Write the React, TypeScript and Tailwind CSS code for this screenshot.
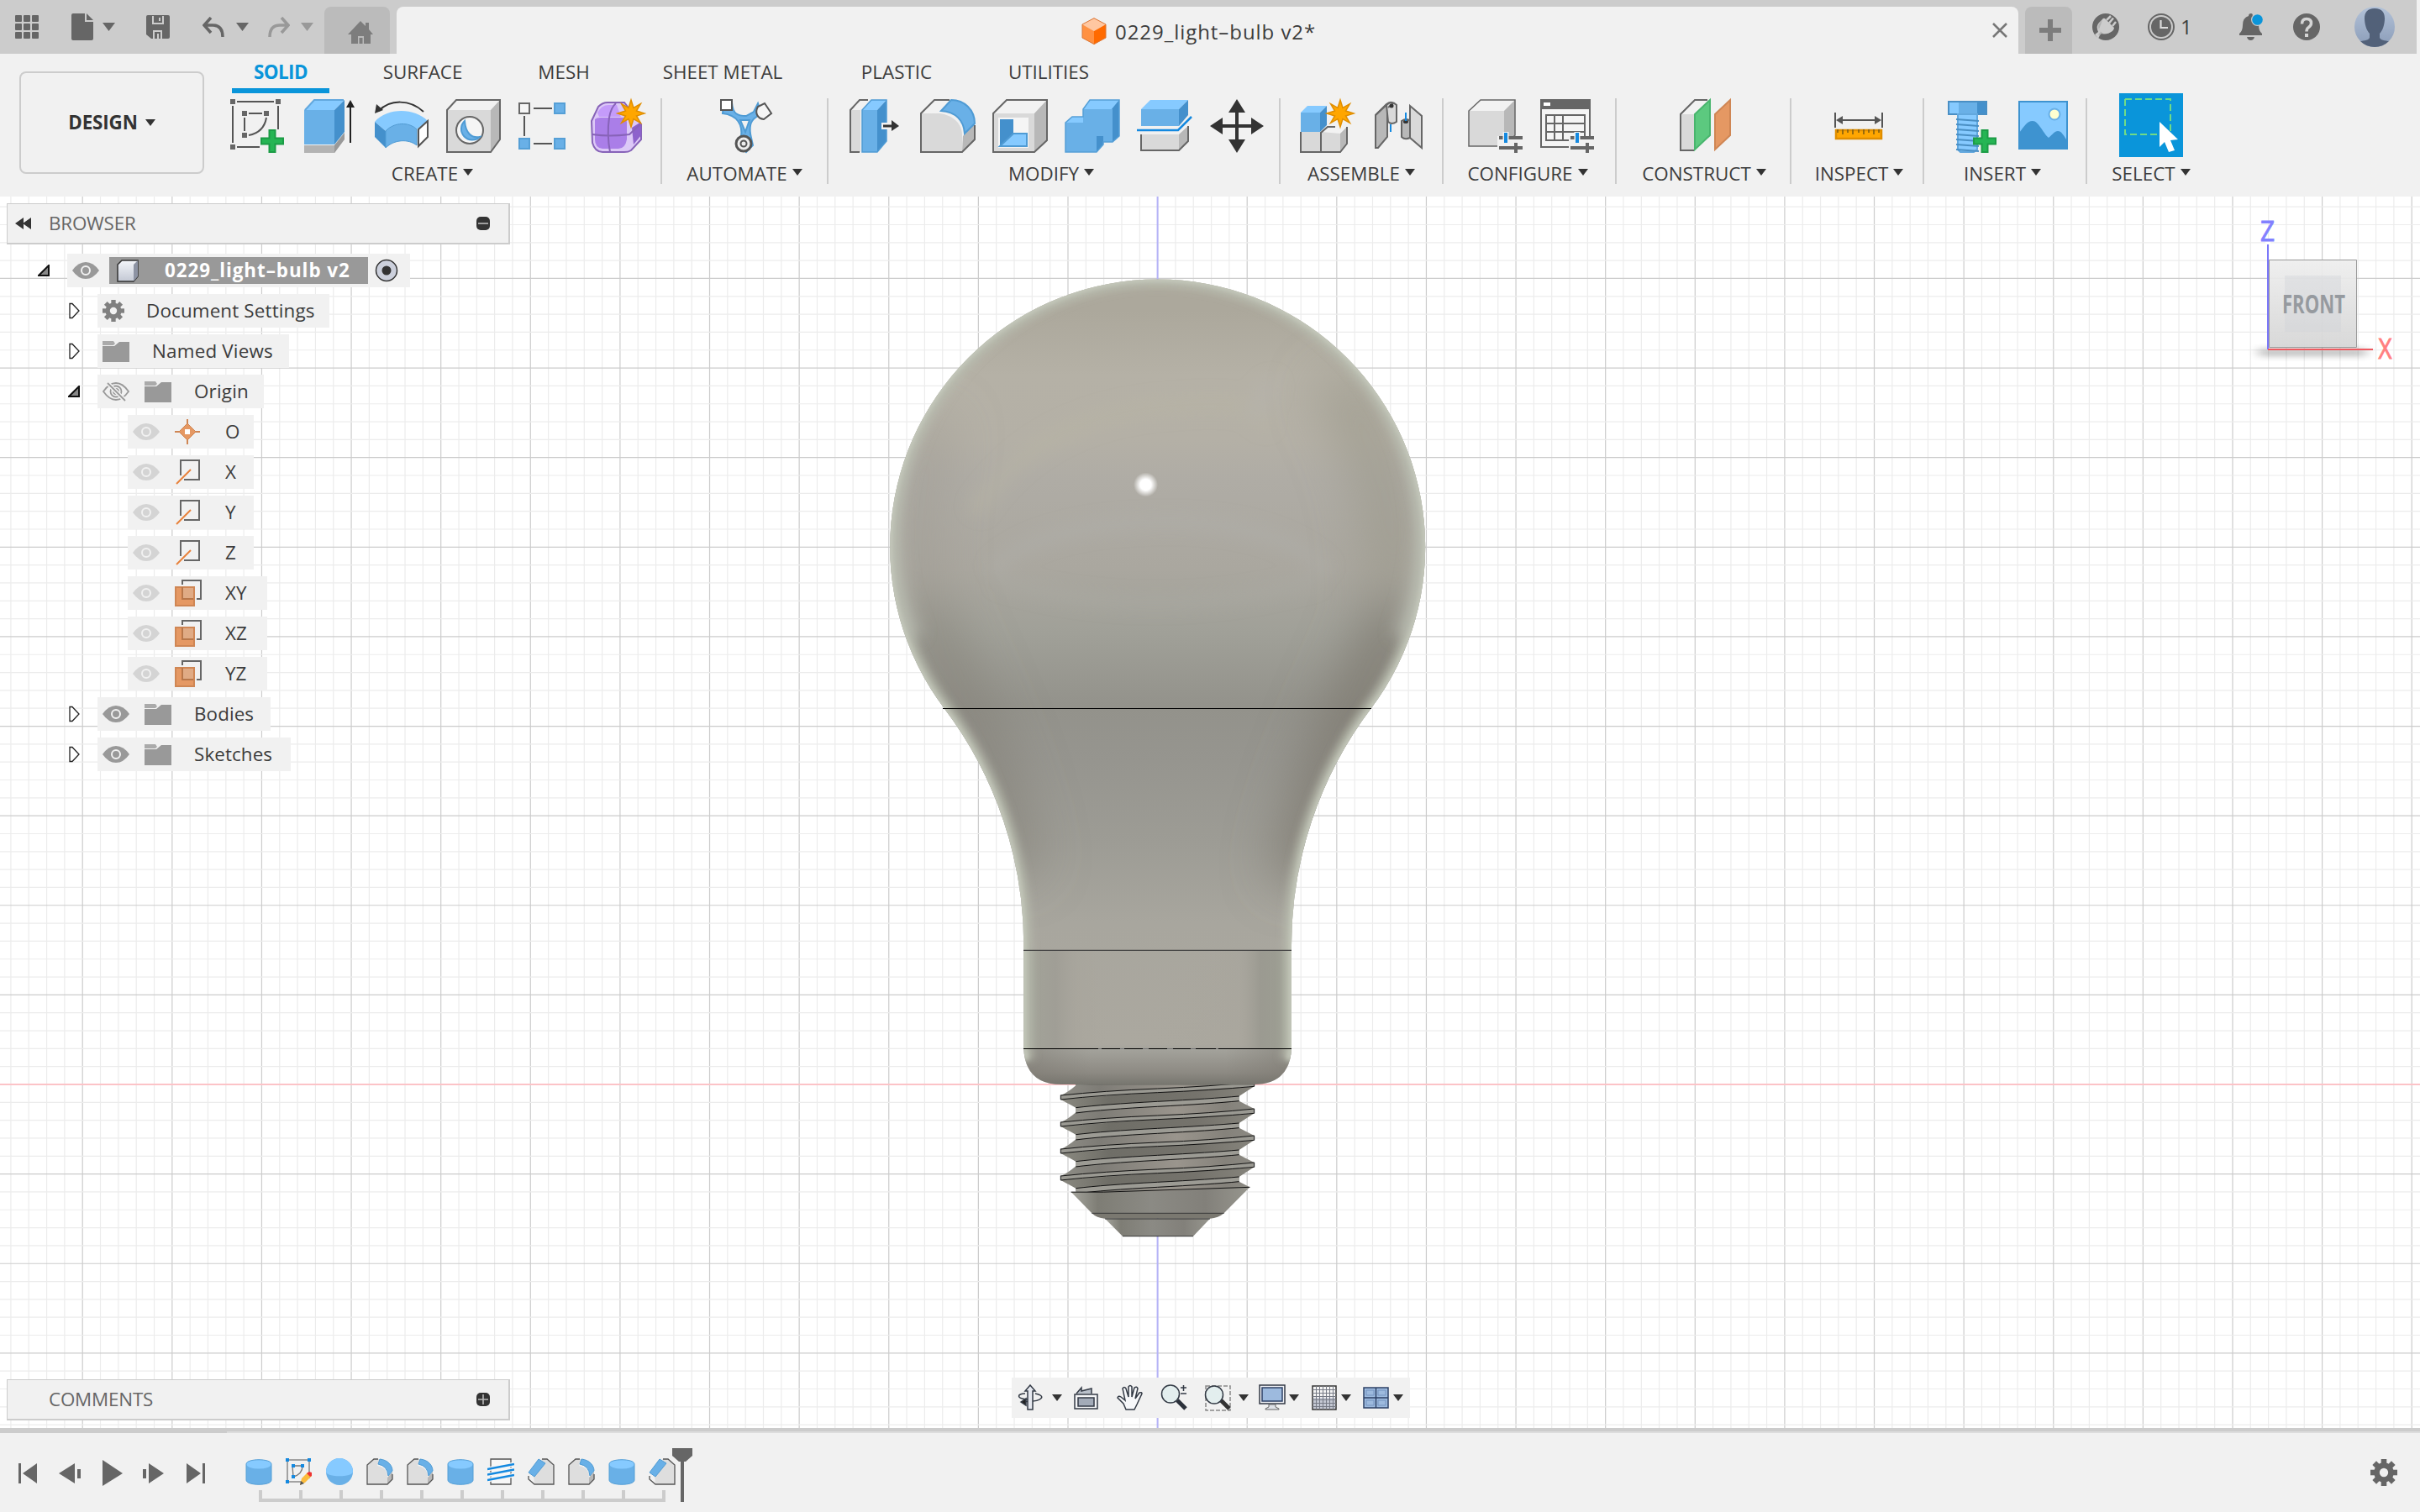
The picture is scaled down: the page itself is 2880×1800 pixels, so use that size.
import React from "react";

type Kids = { children?: React.ReactNode };

const Icon = ({ children }: Kids) => (
  <svg className="h-[66px] w-[66px] shrink-0 overflow-visible" viewBox="0 0 66 66" fill="none" strokeWidth="2">
    {children}
  </svg>
);

const Caret = ({ className = "" }: { className?: string }) => (
  <svg className={`h-[8px] w-[12px] shrink-0 fill-[#333] ${className}`} viewBox="0 0 12 8">
    <path d="M0 0h12L6 8z" />
  </svg>
);

const BarCaret = ({ className }: { className: string }) => (
  <svg className={`h-[10px] w-[15px] shrink-0 ${className}`} viewBox="0 0 15 10">
    <path d="M0 0h15L7.500 10z" />
  </svg>
);

const Plus = ({ x, y }: { x: number; y: number }) => (
  <path
    transform={`translate(${x} ${y})`}
    d="M9.500 1h7v9.500H26v7h-9.500V27h-7v-9.500H0v-7h9.500z"
    fill="#26b554"
    stroke="#1c9c46"
    strokeWidth="2"
  />
);

const Star = ({ x, y }: { x: number; y: number }) => (
  <path
    transform={`translate(${x} ${y})`}
    d="M0-16l3 9.500 8.300-4.800L6.500-3 16 0 6.500 3l4.800 8.300L3 6.500 0 16l-3-9.500-8.300 4.800L-6.500 3-16 0l9.500-3-4.800-8.300L-3-6.500z"
    fill="#ffa600"
    stroke="#e08e00"
    strokeWidth="1.500"
  />
);

const Tweaks = ({ x, y }: { x: number; y: number }) => (
  <g transform={`translate(${x} ${y})`}>
    <path d="M-2 4h31v4H-2zM-2 8h31v15H-2z" fill="#f1f1f1" stroke="none" />
    <path d="M0 6h28M0 18h28M20 12v12" stroke="#666" strokeWidth="4" />
    <path d="M8-1v14" stroke="#f1f1f1" strokeWidth="7" />
    <path d="M8 0v12" stroke="#1489e0" strokeWidth="4" />
  </g>
);

/* ---------- ribbon icons ---------- */

const SketchIcon = () => (
  <Icon>
    <path d="M9 5h44M4 10v44M58 10v28M9 59h27M18 24v16M23 19h16M44 24C42 36 34 43 23 45" stroke="#555" />
    <path d="M1 2h6v6H1zM55 2h6v6h-6zM1 56h6v6H1zM15 16h6v6h-6zM41 16h6v6h-6zM15 42h6v6h-6z" fill="#666" />
    <Plus x={38} y={38} />
  </Icon>
);

const ExtrudeIcon = () => (
  <Icon>
    <path d="M3 57h36l12-15v7L39 66H3z" fill="#b3b3b3" />
    <path d="M39 57l12-15v8L39 66z" fill="#999" />
    <path d="M3 15L15 3h36L39 15z" fill="#86caff" />
    <path d="M3 15h36v41H3z" fill="#69b0e7" />
    <path d="M39 15L51 3v38L39 56z" fill="#4490cc" />
    <path d="M4 15L15 3h35" stroke="#62a8de" />
    <path d="M58 54V10" stroke="#222" />
    <path d="M58 3l5 9H53z" fill="#222" />
  </Icon>
);

const RevolveIcon = () => (
  <Icon>
    <path d="M6 16C19 2 43 2 59 17" stroke="#333" />
    <path d="M1 19L3 8l8 7z" fill="#333" />
    <path d="M1 29C16 12 48 12 64 28L51 38C42 29 24 29 14 40z" fill="#86caff" />
    <path d="M1 29l13 11v20L1 47z" fill="#4490cc" />
    <path d="M14 40C24 29 42 29 51 38v19C41 49 24 50 14 60z" fill="#69b0e7" stroke="#4f9bd4" strokeWidth="1" />
    <path d="M64 28L53 38v20l11-11z" fill="#fff" stroke="#555" />
  </Icon>
);

const HoleIcon = () => (
  <Icon>
    <path d="M1 15L12 3h52L53 15z" fill="#f2f2f2" />
    <path d="M1 15h52v50H1z" fill="#d9d9d9" />
    <path d="M53 15L64 3v47L53 65z" fill="#b8b8b8" />
    <path d="M1 15L12 3h52v47L53 65H1z" stroke="#666" />
    <circle cx="28" cy="39" r="16" fill="#f5f5f5" stroke="#666" />
    <path d="M22 28C23 42 30 49 40 47A13 13 0 1 1 22 28z" fill="#69b0e7" stroke="#4f9bd4" />
  </Icon>
);

const PatternIcon = () => (
  <Icon>
    <path d="M18 13h22M7 22v24M18 55h22" stroke="#555" />
    <path d="M1 7h12v12H1z" fill="#f5f5f5" stroke="#666" />
    <path d="M43 7h12v12H43zM1 49h12v12H1zM43 49h12v12H43z" fill="#69b0e7" stroke="#559fd6" />
  </Icon>
);

const FormIcon = () => (
  <Icon>
    <path d="M1 28L9 11Q14 6 20 6h20l20 26v18L48 63q-3 2-8 2H14Q5 65 2 54z" fill="#dcc8f7" stroke="#8763b8" />
    <path d="M8 18q5-9 13-9h10l5 14H10z" fill="#c49bfa" />
    <path d="M5 26Q7 24 12 24h26q5 0 5 6v20q-2 11-10 11H14Q5 60 5 50z" fill="#aa7ee8" />
    <path d="M49 36l11-7v16l-9 11z" fill="#8d62cc" />
    <path d="M22 24q-3 20 1 41M2 44q20 3 44 0l13-12M22 24q2-12 8-17" stroke="#8763b8" />
    <Star x={48} y={19} />
  </Icon>
);

const AutomateIcon = () => (
  <Icon>
    <path d="M18 6c1 14 7 16 17 16l9-5 5-10 4 12-7 5c-6 4-8 12-5 24l2 9-8 8-8-8 2-10c2-14-4-26-22-28l1-12z" fill="#69b0e7" stroke="#4f9bd4" />
    <path d="M28 27h11l-5 14z" fill="#f1f1f1" stroke="#4f9bd4" />
    <path d="M5 3h13v12H5z" fill="#fff" stroke="#555" />
    <path d="M57 7l8 12-9 7c-8-1-11-8-7-15z" fill="#f5f5f5" stroke="#555" />
    <circle cx="32" cy="55" r="9" fill="#eee" stroke="#555" strokeWidth="3" />
    <circle cx="32" cy="55" r="3.500" stroke="#555" />
  </Icon>
);

const PressPullIcon = () => (
  <Icon>
    <path d="M3 15L14 3h12L15 15v50H3z" fill="#f2f2f2" />
    <path d="M3 15h12v50H3z" fill="#d9d9d9" />
    <path d="M24 3H14L3 15v50h11" stroke="#666" />
    <path d="M17 15L28 3h18L35 15z" fill="#86caff" />
    <path d="M17 15h18v50H17z" fill="#69b0e7" />
    <path d="M35 15L46 3v49L35 65z" fill="#4490cc" />
    <path d="M17 65V15L28 3h18v49L35 65z" stroke="#4f9bd4" strokeWidth="1.500" />
    <path d="M41 31h11v-5l10 8-10 8v-5H41z" fill="#f1f1f1" stroke="#f1f1f1" strokeWidth="2" />
    <path d="M42 34h12" stroke="#333" strokeWidth="3" />
    <path d="M52 27l9 7-9 6z" fill="#333" />
  </Icon>
);

const FilletIcon = () => (
  <Icon>
    <path d="M1 19L17 3h18L25 18z" fill="#f2f2f2" />
    <path d="M1 19h22c16 2 27 12 27 26v20H1z" fill="#d9d9d9" />
    <path d="M51 46l14-15v20L50 65z" fill="#b8b8b8" />
    <path d="M35 3H17L1 19v46h49l15-15V33" stroke="#666" />
    <path d="M37 3c16 0 28 12 28 28L53 43C52 27 42 17 25 16z" fill="#69b0e7" stroke="#4f9bd4" />
  </Icon>
);

const ShellIcon = () => (
  <Icon>
    <path d="M1 19L17 3h48L50 19z" fill="#f2f2f2" />
    <path d="M1 19h49v46H1z" fill="#d9d9d9" />
    <path d="M50 19L65 3v48L50 65z" fill="#b8b8b8" />
    <path d="M1 19L17 3h48v48L50 65H1z" stroke="#666" />
    <path d="M7 24h36v36H7z" fill="#f5f5f5" />
    <path d="M9 26h16v17L9 58z" fill="#4490cc" />
    <path d="M9 58l16-15h16v15z" fill="#86caff" stroke="#4f9bd4" />
  </Icon>
);

const CombineIcon = () => (
  <Icon>
    <path d="M1 30l8-7h13v-9l8-11h35v43l-8 7H46v3l-8 9H1z" fill="#69b0e7" />
    <path d="M1 30l8-7h13v7zM22 14l8-11h35l-9 11z" fill="#86caff" />
    <path d="M56 14l9-11v43l-8 7V14zM38 46h8v10l-8 9z" fill="#4490cc" />
    <path d="M1 30l8-7h13v-9l8-11h35v43l-8 7H46v3l-8 9H1z" stroke="#559fd6" strokeWidth="1.500" />
  </Icon>
);

const SplitIcon = () => (
  <Icon>
    <path d="M5 14L16 3h45L50 14z" fill="#86caff" />
    <path d="M5 14h45v20H5z" fill="#69b0e7" />
    <path d="M50 14L61 3v18L50 34z" fill="#4490cc" />
    <path d="M5 44h45v19H5z" fill="#d9d9d9" />
    <path d="M50 44l11-10v18L50 63z" fill="#b8b8b8" />
    <path d="M5 44v19h45l11-11V34" stroke="#666" />
    <path d="M0 39h49l16-16" stroke="#1489e0" strokeWidth="2.500" />
  </Icon>
);

const MoveIcon = () => (
  <Icon>
    <path d="M33 12v44M11 34h44" stroke="#333" strokeWidth="4" />
    <path d="M33 2l10 16H23zM33 66l10-16H23zM1 34l15-10v20zM65 34L50 24v20z" fill="#333" />
  </Icon>
);

const ComponentIcon = () => (
  <Icon>
    <path d="M2 41h24v24H2z" fill="#d9d9d9" />
    <path d="M26 41h23v24H26z" fill="#d9d9d9" />
    <path d="M26 41l9-6h22l-8 8z" fill="#f2f2f2" />
    <path d="M49 43l8-8v20l-8 10z" fill="#b8b8b8" />
    <path d="M2 41v24h47l8-10V35M26 65V42l8-7h9" stroke="#666" />
    <path d="M2 18l8-8h23l-8 8z" fill="#86caff" />
    <path d="M2 18h23v23H2z" fill="#69b0e7" />
    <path d="M25 18l8-8v23l-8 8z" fill="#4490cc" />
    <Star x={49} y={19} />
  </Icon>
);

const JointIcon = () => (
  <Icon>
    <g transform="translate(2 0)">
      <path d="M3 21L17 8v39L6 60H3z" fill="#b8b8b8" stroke="#666" />
      <path d="M16 9q6-6 12 0v20q-6 4-10 0z" fill="#d9d9d9" stroke="#666" />
      <path d="M3 21L16 8q5-4 8-1l-6 5" stroke="#666" />
      <circle cx="22" cy="10" r="2.500" fill="#333" />
      <path d="M21 32v9" stroke="#1489e0" />
      <path d="M44 10l14 12v38l-14-12z" fill="#d9d9d9" stroke="#666" />
      <path d="M34 28q6-4 10 0v20q-6 3-10-1z" fill="#b8b8b8" stroke="#666" />
      <ellipse cx="39" cy="29" rx="3" ry="2" fill="#333" />
      <path d="M39 18v10" stroke="#1489e0" />
    </g>
  </Icon>
);

const ConfigureIcon = () => (
  <Icon>
    <path d="M1 16L15 3h41L43 16z" fill="#f2f2f2" />
    <path d="M1 16h42v42H1z" fill="#d9d9d9" />
    <path d="M43 16L56 3v42L43 58z" fill="#b8b8b8" />
    <path d="M1 16L15 3h41v42L43 58H1z" stroke="#666" strokeWidth="1.500" />
    <Tweaks x={37} y={42} />
  </Icon>
);

const ConfigTableIcon = () => (
  <Icon>
    <path d="M1 3h58v56H1z" fill="#f5f5f5" stroke="#666" />
    <path d="M0 2h60v12H0z" fill="#666" />
    <path d="M4 6h8v4H4z" fill="#fff" />
    <path d="M7 21h46v30H7zM7 31h46M7 41h46M17 21v30M27 21v30" stroke="#666" />
    <Tweaks x={36} y={42} />
  </Icon>
);

const PlaneIcon = () => (
  <Icon>
    <path d="M4 20L21 3h16L21 20z" fill="#f2f2f2" />
    <path d="M4 20h16v43H4z" fill="#d9d9d9" />
    <path d="M36 3H21L4 20v43h16" stroke="#666" />
    <path d="M21 20L39 3v42L21 62z" fill="#5cc97f" stroke="#48b56d" />
    <path d="M45 20L63 3v42L45 62z" fill="#e59863" stroke="#cf8654" />
  </Icon>
);

const MeasureIcon = () => (
  <Icon>
    <path d="M5 18v18M61 18v18M10 27h46" stroke="#555" />
    <path d="M6 27l8-5v10zM60 27l-8-5v10z" fill="#555" />
    <path d="M6 39h54v10H6z" fill="#ffa600" stroke="#e08e00" strokeWidth="2.500" />
    <path d="M8 38v4M14 38v6M20 38v4M26 38v6M33 38v4M39 38v6M45 38v4M51 38v6M57 38v4" stroke="#7a5a10" strokeWidth="1.500" />
  </Icon>
);

const BoltIcon = () => (
  <Icon>
    <path d="M6 5h45v15H6z" fill="#69b0e7" stroke="#4a8fc4" />
    <path d="M7 6h11v13H7z" fill="#86caff" />
    <path d="M40 6h10v13H40z" fill="#4490cc" />
    <path d="M17 20h23v42l-4 3H20l-3-3z" fill="#86caff" stroke="#62a8de" />
    {[26, 32, 38, 44, 50, 56, 62].map((y) => (
      <path key={y} d={`M15 ${y}l27 2`} stroke="#4a8fc4" />
    ))}
    <Plus x={36} y={38} />
  </Icon>
);

const ImageIcon = () => (
  <Icon>
    <path d="M4 5h57v56H4z" fill="#86caff" stroke="#3e93d0" />
    <path d="M4 42c5-6 9-14 16-14s12 14 19 20c5-4 7-8 11-8s7 5 10 10v10H4z" fill="#3e93d0" />
    <circle cx="46" cy="20" r="6.500" fill="#feffd0" stroke="#69b0e7" strokeWidth="2" />
  </Icon>
);

const SelectIcon = () => (
  <svg className="-my-[5px] h-[76px] w-[76px] bg-[#0a95da]" viewBox="0 0 76 76" fill="none">
    <path d="M7 7h54v41H50M7 7v42h38" stroke="#70db86" strokeWidth="2" strokeDasharray="8 4" />
    <path d="M48 34l22 21-9 1 5 12-7 2-5-12-6 6z" fill="#fff" />
  </svg>
);

const groups: { label: string; width: string; icons: React.FC[]; row?: string; text?: string }[] = [
  { label: "CREATE", width: "w-[545px]", icons: [SketchIcon, ExtrudeIcon, RevolveIcon, HoleIcon, PatternIcon, FormIcon], row: "pl-3" },
  { label: "AUTOMATE", width: "w-[198px]", icons: [AutomateIcon] },
  { label: "MODIFY", width: "w-[538px]", icons: [PressPullIcon, FilletIcon, ShellIcon, CombineIcon, SplitIcon, MoveIcon], row: "pl-[6px]", text: "pr-[6px]" },
  { label: "ASSEMBLE", width: "w-[194px]", icons: [ComponentIcon, JointIcon], row: "pl-1" },
  { label: "CONFIGURE", width: "w-[206px]", icons: [ConfigureIcon, ConfigTableIcon], row: "pl-[6px]", text: "pr-1" },
  { label: "CONSTRUCT", width: "w-[208px]", icons: [PlaneIcon], row: "pl-[3px]", text: "pl-[2px]" },
  { label: "INSPECT", width: "w-[158px]", icons: [MeasureIcon], row: "pl-1", text: "pl-[5px]" },
  { label: "INSERT", width: "w-[194px]", icons: [BoltIcon, ImageIcon], row: "pl-[6px]", text: "pr-[6px]" },
  { label: "SELECT", width: "w-[150px]", icons: [SelectIcon], row: "pl-[2px]", text: "pl-[2px]" },
];

const tabs = [
  { label: "SOLID", cls: "w-[116px] font-bold text-[#0a95da] tracking-[-0.6px]" },
  { label: "SURFACE", cls: "ml-[53px] w-[116px]" },
  { label: "MESH", cls: "ml-[52px] w-[116px]" },
  { label: "SHEET METAL", cls: "ml-[44px] w-[174px]" },
  { label: "PLASTIC", cls: "ml-[62px] w-[116px]" },
  { label: "UTILITIES", cls: "ml-[65px] w-[116px]" },
];

/* ---------- title bar ---------- */

const TitleBar = () => (
  <header className="mr-1 flex h-16 items-end bg-[#cccccc]">
    <div className="flex h-16 w-[386px] items-center pl-[18px]">
      <svg className="h-7 w-7 fill-[#666]" viewBox="0 0 28 28">
        {[0, 10, 20].map((y) => [0, 10, 20].map((x) => <rect key={`${x}-${y}`} x={x} y={y} width="8" height="8" rx="1" />))}
      </svg>
      <svg className="ml-[39px] h-8 w-[26px] fill-[#666]" viewBox="0 0 26 32">
        <path d="M2 0h14v10h10v20q0 2-2 2H2q-2 0-2-2V2q0-2 2-2zM18 0l8 8h-8z" />
      </svg>
      <BarCaret className="ml-[11px] fill-[#666]" />
      <svg className="ml-[37px] h-7 w-7" viewBox="0 0 28 28">
        <path d="M2 0h24q2 0 2 2v24q0 2-2 2H6l-6-5V2q0-2 2-2z" fill="#666" />
        <path d="M8 1v9h12V1M9 28v-9h9v9" fill="none" stroke="#ccc" strokeWidth="2" />
        <path d="M15 3h2v4h-2zM13 22h2v6h-2z" fill="#ccc" />
      </svg>
      <svg className="ml-[39px] h-6 w-[26px]" viewBox="0 0 26 24" fill="none" stroke="#666" strokeWidth="3.500">
        <path d="M10 1L2 10l8 9M3 10h9q12 0 12 14" />
      </svg>
      <BarCaret className="ml-[14px] fill-[#666]" />
      <svg className="ml-[23px] h-6 w-[26px]" viewBox="0 0 26 24" fill="none" stroke="#999" strokeWidth="3.500">
        <path d="M16 1l8 9-8 9M23 10h-9Q2 10 2 24" />
      </svg>
      <BarCaret className="ml-[13px] fill-[#999]" />
    </div>
    <div className="flex h-14 w-[78px] items-center justify-center rounded-t-lg bg-[#bbbbbb] pl-[7px] pt-[6px]">
      <svg className="h-[28px] w-[30px]" viewBox="0 0 30 28">
        <path d="M15 0l6 6V2h4v8l5 6h-3v11H19v-9h-7v9H4V16H0z" fill="#7d7d7d" />
        <path d="M13.500 20h4v7h-4z" fill="#7d7d7d" />
      </svg>
    </div>
    <div className="ml-2 flex h-14 w-[1930px] items-center rounded-t-lg bg-[#f1f1f1]">
      <svg className="ml-[815px] mt-[2px] h-8 w-[30px]" viewBox="0 0 30 32">
        <path d="M15 0l14 8-14 8L1 8z" fill="#ffc7a1" />
        <path d="M1 8l14 8v16L1 24z" fill="#ff9142" />
        <path d="M29 8l-14 8v16l14-8z" fill="#ff6a00" />
        <path d="M15 .7L29 8v16l-14 7.500L1 24V8z" fill="none" stroke="#d9783a" strokeWidth="1" />
      </svg>
      <span className="ml-[10px] mt-1 text-[24px] tracking-[0.95px] text-[#3c3c3c]">0229_light–bulb v2*</span>
      <svg className="ml-auto mr-[13px] h-[18px] w-[18px]" viewBox="0 0 18 18" stroke="#777" strokeWidth="2.500">
        <path d="M1 1l16 16M17 1L1 17" />
      </svg>
    </div>
    <div className="ml-2 flex h-14 w-14 items-center justify-center rounded-t-lg bg-[#bbbbbb] pl-[3px]">
      <svg className="h-[26px] w-[26px]" viewBox="0 0 26 26" stroke="#7d7d7d" strokeWidth="6">
        <path d="M13 0v26M0 13h26" />
      </svg>
    </div>
    <div className="flex h-16 flex-1 items-center pl-6">
      <svg className="h-8 w-8" viewBox="0 0 32 32">
        <circle cx="16" cy="16" r="16" fill="#666" />
        <path d="M3 25L7 22Q4 15 8 11L12 7q1-2 3-1l11 11q0 2-2 4-7 5-13 3l-2 2-2 4z" fill="#ccc" />
        <path d="M17 8l5-5M24 15l4-5M20 11.500l5-6" fill="none" stroke="#ccc" strokeWidth="2.500" />
        <path d="M12 8q-5 4-5 8 0 3 3 6l-3 3q8 7 16 4 5-2 8-8l-5-2q-4 6-10 6-6-2-8-6z" fill="#666" fillOpacity="0.250" />
      </svg>
      <svg className="ml-[34px] h-8 w-8" viewBox="0 0 32 32" fill="none">
        <circle cx="16" cy="16" r="15" stroke="#666" strokeWidth="2" />
        <circle cx="16" cy="16" r="12" fill="#666" />
        <path d="M15.500 8v9H24" stroke="#ddd" strokeWidth="2.200" />
      </svg>
      <span className="ml-[7px] text-[24px] text-[#3c3c3c]">1</span>
      <svg className="ml-[56px] h-8 w-[30px]" viewBox="0 0 30 32">
        <path d="M14 0q2 0 2 3 7 2 7 11 0 7 4 10v2H0v-2q4-3 4-10 0-9 7-11 0-3 3-3zM9 28h9q-1 4-4.500 4T9 28z" fill="#666" />
        <circle cx="21.500" cy="7.500" r="7.500" fill="#ccc" />
        <circle cx="21.500" cy="7.500" r="6.300" fill="#0a95da" />
      </svg>
      <svg className="ml-[34px] h-8 w-8" viewBox="0 0 32 32" fill="none">
        <circle cx="16" cy="16" r="16" fill="#666" />
        <path d="M10.500 12.500q0-6 5.500-6t5.500 5q0 3-3 5-2.500 1.500-2.500 5" stroke="#d5d5d5" strokeWidth="3.500" />
        <path d="M14 24h4v4h-4z" fill="#d5d5d5" />
      </svg>
      <svg className="ml-[41px] h-12 w-12" viewBox="0 0 48 48">
        <defs>
          <linearGradient id="avatar" x1="0" y1="0" x2="0" y2="1">
            <stop offset="0" stopColor="#b3c2d8" />
            <stop offset="1" stopColor="#8a9cb8" />
          </linearGradient>
          <clipPath id="avatarClip">
            <circle cx="24" cy="24" r="24" />
          </clipPath>
        </defs>
        <g clipPath="url(#avatarClip)">
          <path d="M0 0h48v48H0z" fill="url(#avatar)" />
          <path d="M24 2c9 0 12 5 12 12 0 6-2 14-6 18v5c2 4 9 3 13 5l1 8H4l1-8c4-2 11-1 13-5v-5c-4-4-6-12-6-18C12 7 15 2 24 2z" fill="#526179" />
        </g>
      </svg>
    </div>
  </header>
);

const Ribbon = () => (
  <section className="flex h-[170px] bg-[#f1f1f1]">
    <button className="ml-[23px] mt-[21px] flex h-[122px] w-[220px] items-center justify-center gap-[9px] rounded-lg border-2 border-[#cccccc] text-[22.400px] font-bold tracking-[-0.100px] text-[#333]">
      DESIGN
      <Caret />
    </button>
    <div className="flex flex-col">
      <nav className="flex h-[47px] pl-[33px]">
        {tabs.map((t, i) => (
          <div key={t.label} className={`flex h-[47px] flex-col items-center text-[22.400px] ${i ? "text-[#3c3c3c]" : ""} ${t.cls}`}>
            <span className="mt-[6px] leading-[31px] whitespace-nowrap">{t.label}</span>
            {i === 0 && <span className="mt-1 h-[6px] w-full shrink-0 bg-[#0a95da]" />}
          </div>
        ))}
      </nav>
      <div className="mt-[6px] flex h-[102px]">
        {groups.map((g, i) => (
          <div
            key={g.label}
            className={`flex flex-col items-center ${i < groups.length - 1 ? "border-r-2 border-[#cccccc]" : ""} ${g.width}`}
          >
            <div className={`-mt-px flex ${g.row ?? ""}`}>
              {g.icons.map((I, k) => (
                <span key={k} className="flex h-[66px] w-[86px] items-center justify-center">
                  <I />
                </span>
              ))}
            </div>
            <div className={`mt-[9px] flex items-center gap-[6px] text-[22.400px] leading-[31px] text-[#3c3c3c] ${g.text ?? ""}`}>
              {g.label}
              <Caret className="-mt-[3px]" />
            </div>
          </div>
        ))}
      </div>
    </div>
  </section>
);

/* ---------- browser tree ---------- */

const Eye = ({ dim = false }: { dim?: boolean }) => (
  <svg className="h-5 w-8 shrink-0" viewBox="0 0 32 20">
    <path d="M0 10Q7 0 16 0t16 10q-7 10-16 10T0 10z" fill={dim ? "#d4d4d4" : "#999"} />
    <circle cx="16" cy="10" r="5" fill={dim ? "#d4d4d4" : "#999"} stroke="#f1f1f1" strokeWidth="2" />
  </svg>
);

const EyeOff = () => (
  <svg className="h-6 w-8 shrink-0" viewBox="0 0 32 24" fill="none" stroke="#999" strokeWidth="1.800">
    <path d="M1 12Q8 2 16 2t15 10q-7 10-15 10T1 12z" />
    <circle cx="16" cy="12" r="6.500" />
    <circle cx="16" cy="12" r="3" />
    <path d="M6 2l21 21" stroke="#f1f1f1" strokeWidth="5" />
    <path d="M6 2l21 21" />
  </svg>
);

const Folder = () => (
  <svg className="h-[26px] w-8 shrink-0" viewBox="0 0 32 26">
    <path d="M0 1h13l2 3-2 2H0z" fill="#aaa" />
    <path d="M0 7h14l6-5h12v24H0z" fill="#999" />
  </svg>
);

const Gear = ({ className, fill }: { className: string; fill: string }) => (
  <svg className={className} viewBox="-17 -17 34 34">
    {[0, 45, 90, 135, 180, 225, 270, 315].map((a) => (
      <rect key={a} x="-3.500" y="-17" width="7" height="8" fill={fill} transform={`rotate(${a})`} />
    ))}
    <circle r="9" fill="none" stroke={fill} strokeWidth="7" />
  </svg>
);

const OpenArrow = () => (
  <svg className="ml-px h-[14px] w-[14px]" viewBox="0 0 14 14">
    <path d="M13 1v12H1z" fill="#888" stroke="#111" strokeWidth="2" />
  </svg>
);

const ClosedArrow = () => (
  <svg className="ml-px h-[20px] w-[13px]" viewBox="0 0 13 20">
    <path d="M1 1.500l3 0 8 8.500-8 8.500H1z" fill="#fff" stroke="#222" strokeWidth="1.300" />
  </svg>
);

const PointIcon = () => (
  <svg className="h-[30px] w-[30px]" viewBox="0 0 30 30">
    <path d="M15 0v30M0 15h30" stroke="#cf8654" strokeWidth="2" />
    <path d="M15 5l10 10-10 10L5 15z" fill="#e59863" stroke="#cf8654" />
    <path d="M12 12h6v6h-6z" fill="#fff" />
  </svg>
);

const AxisIcon = () => (
  <svg className="h-[30px] w-[30px]" viewBox="0 0 30 30" fill="none">
    <path d="M7 19V1h22v23H11" stroke="#666" strokeWidth="2" />
    <path d="M2 29l17-17" stroke="#e8813a" strokeWidth="2" />
  </svg>
);

const PlaneRowIcon = () => (
  <svg className="h-8 w-8" viewBox="0 0 32 32" fill="none">
    <path d="M9 6V1h22v22h-5" stroke="#666" strokeWidth="2" />
    <path d="M1 9h22v22H1z" fill="#e59863" stroke="#cf8654" strokeWidth="2" />
    <path d="M8 10h14v13H8z" fill="#e0ab85" />
    <path d="M9 9v14h13" stroke="#b8774a" strokeWidth="2" />
  </svg>
);

const Row = ({ indent, arrow, box, children }: Kids & { indent: string; arrow?: React.ReactNode; box: string }) => (
  <div className={`flex h-10 items-center ${indent}`}>
    <span className="flex w-[36px] shrink-0 items-center">{arrow}</span>
    <div className={`flex h-10 items-center whitespace-nowrap bg-[#f1f1f1] text-[22.400px] text-[#3c3c3c] ${box}`}>{children}</div>
  </div>
);

const origin: { label: string; kind: "point" | "axis" | "plane" }[] = [
  { label: "O", kind: "point" },
  { label: "X", kind: "axis" },
  { label: "Y", kind: "axis" },
  { label: "Z", kind: "axis" },
  { label: "XY", kind: "plane" },
  { label: "XZ", kind: "plane" },
  { label: "YZ", kind: "plane" },
];

const PanelHeader = ({ title, open }: { title: string; open: boolean }) => (
  <div className="flex h-[49px] w-[599px] items-center border-2 border-t border-l border-[#cccccc] bg-[#f1f1f1] text-[22.400px] tracking-[-0.2px] text-[#666]">
    <span className="flex w-[49px] pl-[9px]">
      {open && (
        <svg className="h-[14px] w-5" viewBox="0 0 20 14">
          <path d="M0 7l10-7v14zM9 7l10-7v14z" fill="#333" />
        </svg>
      )}
    </span>
    {title}
    <svg className="ml-auto mr-[22px] h-4 w-4" viewBox="0 0 16 16">
      <rect width="16" height="16" rx="5" fill="#333" />
      <path d={open ? "M2 8h12" : "M2 8h12M8 2v12"} stroke="#bbb" strokeWidth="1.600" />
    </svg>
  </div>
);

const Browser = () => (
  <aside className="absolute left-2 top-2 flex flex-col">
    <PanelHeader title="BROWSER" open />
    <div className="mt-[11px] flex flex-col gap-2">
      <Row indent="pl-[36px]" arrow={<OpenArrow />} box="w-[408px] pl-[6px]">
        <Eye />
        <div className="ml-3 flex h-8 w-[308px] items-center bg-[#999] font-bold text-white">
          <svg className="ml-[8px] h-7 w-7" viewBox="0 0 28 28">
            <defs>
              <linearGradient id="cubeG" x1="0" y1="0" x2="0" y2="1">
                <stop offset="0" stopColor="#f4f6fa" />
                <stop offset="1" stopColor="#c3c8d4" />
              </linearGradient>
            </defs>
            <path d="M2 7l5-5h19v19l-5 6H2z" fill="url(#cubeG)" stroke="#333" strokeWidth="1.500" />
            <path d="M21 7l5-5v19l-5 6z" fill="#8d93a3" />
          </svg>
          <span className="ml-[30px] tracking-[0.95px]">0229_light–bulb v2</span>
        </div>
        <svg className="ml-2 h-7 w-7" viewBox="0 0 28 28">
          <circle cx="14" cy="14" r="12.500" fill="#ccd0dc" stroke="#333" strokeWidth="1.500" />
          <circle cx="14" cy="14" r="5.500" fill="#333" />
        </svg>
      </Row>
      <Row indent="pl-[73px]" arrow={<ClosedArrow />} box="w-[276px] pl-[6px] -ml-px">
        <Gear className="h-[26px] w-[26px]" fill="#808080" />
        <span className="ml-[26px] tracking-[0.15px]">Document Settings</span>
      </Row>
      <Row indent="pl-[73px]" arrow={<ClosedArrow />} box="w-[228px] pl-[6px] -ml-px">
        <Folder />
        <span className="ml-[27px] tracking-[0.2px]">Named Views</span>
      </Row>
      <Row indent="pl-[72px]" arrow={<OpenArrow />} box="w-[198px] pl-[6px]">
        <EyeOff />
        <span className="ml-[18px]"><Folder /></span>
        <span className="ml-[27px] tracking-[0.2px]">Origin</span>
      </Row>
      {origin.map(({ label, kind }) => (
        <Row key={label} indent="pl-[108px]" box={kind === "plane" ? "w-[166px] pl-[6px]" : "w-[150px] pl-[6px]"}>
          <Eye dim />
          <span className="ml-[18px] flex w-[60px]">
            {kind === "point" ? <PointIcon /> : kind === "axis" ? <AxisIcon /> : <PlaneRowIcon />}
          </span>
          {label}
        </Row>
      ))}
      {[
        { label: "Bodies", box: "w-[206px] pl-[6px] -ml-px" },
        { label: "Sketches", box: "w-[230px] pl-[6px] -ml-px" },
      ].map(({ label, box }) => (
        <Row key={label} indent="pl-[73px]" arrow={<ClosedArrow />} box={box}>
          <Eye />
          <span className="ml-[18px]"><Folder /></span>
          <span className="ml-[27px] tracking-[0.1px]">{label}</span>
        </Row>
      ))}
    </div>
  </aside>
);

/* ---------- 3D scene ---------- */

const CX = 1377.6;
const CY = 1291;
const STEP = 21.323;

const Grid = () => {
  const lines: React.ReactNode[] = [];
  for (let k = -65; k <= 71; k++) {
    const x = CX + k * STEP;
    lines.push(<path key={`v${k}`} d={`M${x} 234V1700`} stroke={k % 5 === 0 ? "#cccccc" : "#ececec"} />);
  }
  for (let k = -50; k <= 20; k++) {
    const y = CY + k * STEP;
    lines.push(<path key={`h${k}`} d={`M0 ${y}H2880`} stroke={k % 5 === 0 ? "#cccccc" : "#ececec"} />);
  }
  return (
    <g strokeWidth="1.200">
      {lines}
      <path d={`M0 ${CY}H2880`} stroke="#fcc3c7" strokeWidth="2" />
      <path d={`M${CX} 234V1700`} stroke="#b5b3f7" strokeWidth="2" />
    </g>
  );
};

const BULB =
  "M1123.500 843A318.500 318.500 0 1 1 1631.900 843A467 467 0 0 0 1537 1127V1248Q1535 1291 1492 1291H1263Q1220 1291 1218.300 1248V1127A467 467 0 0 0 1123.500 843z";

const BULB_RIM =
  "M1222 1262L1218.300 1248V1127A467 467 0 0 0 1123.500 843A318.500 318.500 0 1 1 1631.900 843A467 467 0 0 0 1537 1127V1248L1533 1262";

const Bulb = () => (
  <g>
    <defs>
      <linearGradient id="body" gradientUnits="userSpaceOnUse" x1="0" y1="332" x2="0" y2="1291">
        <stop offset="0" stopColor="#aca89c" />
        <stop offset="0.040" stopColor="#aca89c" />
        <stop offset="0.120" stopColor="#b5b1a6" />
        <stop offset="0.200" stopColor="#b4b0a6" />
        <stop offset="0.250" stopColor="#afaca5" />
        <stop offset="0.360" stopColor="#aaa79f" />
        <stop offset="0.440" stopColor="#a0a098" />
        <stop offset="0.530" stopColor="#93928b" />
        <stop offset="0.600" stopColor="#96958f" />
        <stop offset="0.700" stopColor="#9d9c95" />
        <stop offset="0.800" stopColor="#a8a69e" />
        <stop offset="0.950" stopColor="#aba89f" />
        <stop offset="0.957" stopColor="#a3a29b" />
        <stop offset="0.985" stopColor="#8d8a83" />
        <stop offset="1" stopColor="#77766f" />
      </linearGradient>
      <linearGradient id="neckSides" gradientUnits="userSpaceOnUse" x1="1218" y1="0" x2="1538" y2="0">
        <stop offset="0" stopColor="#a9ab9f" />
        <stop offset="0.050" stopColor="#a2a298" />
        <stop offset="0.120" stopColor="#a09e96" />
        <stop offset="0.200" stopColor="#a7a49b" stopOpacity="0.500" />
        <stop offset="0.350" stopColor="#aba89f" stopOpacity="0" />
        <stop offset="0.800" stopColor="#a7a49b" stopOpacity="0.300" />
        <stop offset="0.880" stopColor="#9b9a91" />
        <stop offset="0.960" stopColor="#9c9d92" />
        <stop offset="1" stopColor="#aaaca0" />
      </linearGradient>
      <linearGradient id="sideTint" gradientUnits="userSpaceOnUse" x1="1218" y1="0" x2="1538" y2="0">
        <stop offset="0" stopColor="#77736b" stopOpacity="0.400" />
        <stop offset="0.250" stopColor="#77736b" stopOpacity="0" />
        <stop offset="0.750" stopColor="#77736b" stopOpacity="0" />
        <stop offset="1" stopColor="#77736b" stopOpacity="0.450" />
      </linearGradient>
      <clipPath id="bulbClip">
        <path d={BULB} />
      </clipPath>
      <filter id="b2" x="-20%" y="-20%" width="140%" height="140%"><feGaussianBlur stdDeviation="2.500" /></filter>
      <filter id="b5" x="-20%" y="-20%" width="140%" height="140%"><feGaussianBlur stdDeviation="5" /></filter>
      <filter id="b8" x="-50%" y="-50%" width="200%" height="200%"><feGaussianBlur stdDeviation="9" /></filter>
      <filter id="b30" x="-80%" y="-50%" width="260%" height="200%"><feGaussianBlur stdDeviation="30" /></filter>
      <radialGradient id="spot">
        <stop offset="0" stopColor="#fff" />
        <stop offset="0.450" stopColor="#fff" />
        <stop offset="1" stopColor="#fff" stopOpacity="0" />
      </radialGradient>
    </defs>
    <path d={BULB} fill="url(#body)" />
    <g clipPath="url(#bulbClip)">
      <g filter="url(#b30)" fill="none">
        <path d="M1095 720C1125 810 1175 870 1210 1040" stroke="#827e75" strokeWidth="56" strokeOpacity="0.600" />
        <path d="M1665 720C1640 810 1580 880 1545 1050" stroke="#7b776d" strokeWidth="64" strokeOpacity="0.750" />
        <path d="M1590 450Q1660 560 1660 700" stroke="#9a9789" strokeWidth="60" strokeOpacity="0.650" />
        <path d="M1115 500Q1085 600 1095 720" stroke="#9c9a90" strokeWidth="40" strokeOpacity="0.650" />
      </g>
      <g filter="url(#b8)" fill="none">
        <path d="M1180 680Q1230 625 1375 622T1580 680" stroke="#b3b2ad" strokeWidth="18" strokeOpacity="0.350" />
        <path d="M1185 690Q1370 745 1570 690" stroke="#adaca5" strokeWidth="16" strokeOpacity="0.350" />
        <path d="M1160 610Q1230 500 1375 485T1500 510" stroke="#b8b4a6" strokeWidth="22" strokeOpacity="0.400" />
        <ellipse cx="1503" cy="475" rx="14" ry="30" transform="rotate(30 1503 475)" fill="#b6b4ad" fillOpacity="0.450" />
      </g>
      <path d="M1210 1131h336v117h-336z" fill="url(#neckSides)" />
      <path d="M1210 1249h336v44h-336z" fill="url(#sideTint)" />
      <path d={BULB_RIM} fill="none" stroke="#b8bbae" strokeWidth="18" filter="url(#b5)" strokeOpacity="0.900" />
      <path d="M1086 760A318.500 318.500 0 1 1 1669 760" fill="none" stroke="#b8bab0" strokeWidth="26" filter="url(#b8)" strokeOpacity="0.700" />
      <path d={BULB_RIM} fill="none" stroke="#c9cdc0" strokeWidth="4" filter="url(#b2)" />
      <path d="M1240 1292h276" stroke="#706f68" strokeWidth="10" filter="url(#b5)" />
    </g>
    <circle cx="1363.500" cy="577" r="14.500" fill="url(#spot)" />
    <path d="M1305 1248.500H1450" stroke="#777" strokeWidth="1" />
    <path d="M1122 843.500H1632M1218 1248.500H1307M1311 1248.500h22M1338 1248.500h22M1367 1248.500h22M1396 1248.500h21M1423 1248.500h24M1450 1248.500H1537" stroke="#000" strokeWidth="1.200" />
    <path d="M1218 1131.300H1537" stroke="#444" strokeWidth="1.200" />
  </g>
);

const Thread = () => (
  <g transform="translate(1180 1100) scale(0.33333)">
    <defs>
      <linearGradient id="cone" x1="0" y1="0" x2="1" y2="0">
        <stop offset="0" stopColor="#a5a59d" />
        <stop offset="0.150" stopColor="#7e7d75" />
        <stop offset="0.450" stopColor="#8b8a84" />
        <stop offset="0.750" stopColor="#82807a" />
        <stop offset="1" stopColor="#97968e" />
      </linearGradient>
      <linearGradient id="flank" x1="0" y1="0" x2="1" y2="0">
        <stop offset="0" stopColor="#8e8d86" />
        <stop offset="0.200" stopColor="#7e7c76" />
        <stop offset="0.600" stopColor="#9a958d" />
        <stop offset="0.850" stopColor="#85827b" />
        <stop offset="1" stopColor="#8b8982" />
      </linearGradient>
      <linearGradient id="under" x1="0" y1="0" x2="1" y2="0">
        <stop offset="0" stopColor="#8a8980" />
        <stop offset="0.250" stopColor="#6f6e67" />
        <stop offset="0.700" stopColor="#75736c" />
        <stop offset="1" stopColor="#86847c" />
      </linearGradient>
      <clipPath id="threadClip">
        <path d="M0 573H1200V940H922L600 955 400 957H0z" />
      </clipPath>
    </defs>
    <path d="M284 957H400L922 940 830 1033H358z" fill="url(#cone)" />
    <path d="M358 1033H830Q810 1050 780 1052H405Q375 1050 358 1033z" fill="#7a7870" />
    <path d="M405 1052H780L720 1115H468z" fill="url(#cone)" />
    <g clipPath="url(#threadClip)">
      <path d="M301 573H884V940L600 955H301z" fill="#85827b" />
      {[-1, 0, 1, 2, 3, 4].map((k) => (
        <g key={k} transform={`translate(0 ${k * 96})`}>
          <path d="M301 577Q275 600 247 612Q400 596 592 588T938 564L884 536Q600 552 301 577z" fill="url(#flank)" />
          <path d="M247 627Q400 610 592 602T938 580L884 615Q600 632 301 656z" fill="url(#under)" />
          <path d="M301 656Q400 644 592 634T884 615V632Q750 638 592 652T301 675z" fill="#9c9b94" />
          <path d="M247 612Q400 596 592 588T938 564V580Q780 590 592 602T247 627z" fill="#9a9992" />
        </g>
      ))}
      <g fill="none" stroke="#111" strokeWidth="3">
        {[0, 1, 2, 3, 4].map((k) => (
          <g key={k} transform={`translate(0 ${k * 96})`}>
            <path d="M247 612Q400 596 592 588T938 564M247 627Q400 610 592 602T938 580" />
            <path d="M301 656Q400 644 592 634T884 615M301 675Q400 662 592 652T884 632" />
            <path d="M247 611v16M938 564v16" />
          </g>
        ))}
      </g>
    </g>
    <path d="M284 957.500H400L922 940" stroke="#111" strokeWidth="3" fill="none" />
    <path d="M358 1033H830M405 1053H780M468 1115H720" stroke="#333" strokeWidth="3" />
    <path d="M300 573H940" stroke="#66655f" strokeWidth="3" />
  </g>
);

const Scene = () => (
  <svg className="absolute inset-0 h-full w-full" viewBox="0 234 2880 1466">
    <Grid />
    <Thread />
    <Bulb />
  </svg>
);

const ViewCube = () => (
  <svg className="absolute right-0 top-0 h-[220px] w-[240px] font-['Open_Sans',sans-serif]" viewBox="2640 234 240 220">
    <defs>
      <linearGradient id="vc" x1="0" y1="0" x2="0" y2="1">
        <stop offset="0" stopColor="#eeeeee" />
        <stop offset="1" stopColor="#d6d6d6" />
      </linearGradient>
      <filter id="vcBlur" x="-20%" y="-200%" width="140%" height="600%"><feGaussianBlur stdDeviation="7 4" /></filter>
    </defs>
    <path d="M2688 417h128v5h-128z" fill="#000" opacity="0.450" filter="url(#vcBlur)" />
    <path d="M2700.500 309.500h104v104h-104z" fill="url(#vc)" fillOpacity="0.940" stroke="#999" />
    <path d="M2719 328h67v67h-67z" fill="#cdd0d6" fillOpacity="0.350" />
    <text x="2716" y="373" fontSize="30.500" fontWeight="700" fill="#969a9f" textLength="75" lengthAdjust="spacingAndGlyphs">FRONT</text>
    <path d="M2699 286v130" stroke="#7b78fa" strokeWidth="2" />
    <path d="M2699 416h125" stroke="#ee5a60" strokeWidth="2" />
    <path d="M2696 284h6v7h-6z" fill="#fff" />
    <text x="2690" y="287" fontSize="32" fill="#8280ff" stroke="#8280ff" strokeWidth="0.900" textLength="17" lengthAdjust="spacingAndGlyphs">Z</text>
    <text x="2830.500" y="427" fontSize="32" fill="#ff8080" stroke="#ff8080" strokeWidth="0.900" textLength="16" lengthAdjust="spacingAndGlyphs">X</text>
  </svg>
);

/* ---------- navigation bar ---------- */

const Nav = ({ children, className = "" }: Kids & { className?: string }) => (
  <svg className={`h-8 w-8 shrink-0 ${className}`} viewBox="0 0 32 32" fill="none" stroke="#333a45" strokeWidth="1.500">
    {children}
  </svg>
);

const NavBar = () => (
  <div className="absolute bottom-3 left-[1204px] flex h-12 w-[474px] items-center bg-[#f1f1f1] pl-[7px]">
    <Nav>
      <path d="M12 18C-2 17-1 11 9 11M21 11c12 2 11 9-10 9.500H6" />
      <path d="M12 30V8H9l6-7 6 7h-3v22z" fill="#e6e9f0" />
      <path d="M4 21l6-4v8z" fill="#222" />
    </Nav>
    <Caret className="ml-[9px]" />
    <Nav className="ml-[13px]">
      <path d="M2 12h27v17H2z" fill="#f4f5f7" />
      <path d="M6 16h19v10H6z" fill="#a3abb8" />
      <path d="M4 11l6-7v4l12-3v6" fill="#b9c0ca" />
    </Nav>
    <Nav className="ml-[20px]">
      <path d="M11 30L8 23 1 16q1-3 4-1l5 4L7 5q2-3 4 0l3 10V3q2-3 4 0v12l3-11q3-2 4 1l-3 12 5-7q3-1 3 1l-6 13-3 6z" fill="#f7f8fa" />
    </Nav>
    <Nav className="ml-[20px]">
      <path d="M20 19l10 10" stroke="#2c313b" strokeWidth="5" />
      <circle cx="12" cy="11.500" r="10.500" fill="#e3eeee" />
      <path d="M24 4h7M27.500 1v7M24 11h7" />
    </Nav>
    <Nav className="ml-[20px]">
      <path d="M2 2h29v29H2z" stroke="#888" strokeDasharray="5 2" />
      <path d="M20 19l10 10" stroke="#333" strokeWidth="5" />
      <circle cx="12" cy="12.500" r="10.500" fill="#e3eeee" />
    </Nav>
    <Caret className="ml-[9px]" />
    <Nav className="ml-[12px]">
      <path d="M1 1h30v22H1z" fill="#f0f2f6" />
      <path d="M4 4h24v16H4z" fill="#9dbade" stroke="#2c4066" />
      <path d="M12 24h8v3l4 2v1H8v-1l4-2z" fill="#dfe2e8" stroke="#666" strokeWidth="1" />
    </Nav>
    <Caret className="ml-[4px]" />
    <Nav className="ml-[14px]">
      <path d="M2 2h28v28H2z" fill="#f4f4f4" stroke="#333" />
      <path d="M3 16h26v13H3z" fill="#c3c7d2" stroke="none" />
      <path d="M6.500 2v28M10.500 2v28M14.500 2v28M18.500 2v28M22.500 2v28M26.500 2v28M2 6.500h28M2 10.500h28M2 14.500h28M2 18.500h28M2 22.500h28M2 26.500h28" stroke="#777b86" strokeWidth="1" />
    </Nav>
    <Caret className="ml-[4px]" />
    <Nav className="ml-[14px]">
      <path d="M1 4h29v24H1z" fill="#9dbade" stroke="#2c4066" />
      <path d="M15.500 4v24M1 16h29" stroke="#2c4066" />
      <path d="M4 7h9v6H4zM18 7h9v6h-9zM4 19h9v6H4zM18 19h9v6h-9z" stroke="#7593c0" strokeWidth="1" />
    </Nav>
    <Caret className="ml-[4px]" />
  </div>
);

/* ---------- timeline ---------- */

const Cylinder = () => (
  <g>
    <path d="M1 7v19c0 7 30 7 30 0V7z" fill="#69b0e7" />
    <ellipse cx="16" cy="7" rx="15" ry="5.500" fill="#86caff" />
    <path d="M1 7v19c0 7 30 7 30 0V7C31 0 1 0 1 7z" fill="none" stroke="#559fd6" strokeWidth="1" />
  </g>
);
const TSketch = () => (
  <g fill="none">
    <path d="M2 2h26v22M2 2v26h16" stroke="#888" strokeWidth="1.500" />
    <path d="M8 9h12q0 10-11 13z" stroke="#777" strokeWidth="1.300" />
    <path d="M0 0h4v4H0zM26 0h4v4h-4zM0 26h4v4H0zM7 7h4v4H7zM18 7h4v4h-4zM7 20h4v4H7z" fill="#1489e0" />
    <path d="M17 32l2-8 7-7 5 4-8 8z" fill="#fbbc3d" />
    <path d="M17 32l1-5 4 3z" fill="#555" />
    <path d="M25 18l3-2 3 1v4l-2 1z" fill="#ee3333" />
  </g>
);
const Sphere = () => (
  <g>
    <circle cx="16" cy="16" r="16" fill="#69b0e7" />
    <path d="M0 16a16 16 0 0 1 32 0c0 7-32 7-32 0z" fill="#86caff" />
  </g>
);
const TFillet = () => (
  <g>
    <path d="M1 8l8-7h8l-4 8q12 2 12 14v8H1z" fill="#dedede" />
    <path d="M25 23l6-7v9l-6 6z" fill="#b8b8b8" />
    <path d="M14 1H9L1 8v23h24l6-6v-6" fill="none" stroke="#555" strokeWidth="1.300" />
    <path d="M16 1c10 1 15 8 15 14l-5 6q-1-12-12-14z" fill="#69b0e7" stroke="#4f9bd4" strokeWidth="1" />
  </g>
);
const TChamfer = () => (
  <g>
    <path d="M16 1h7l8 7v23H8l-1-10 12-13z" fill="#dedede" />
    <path d="M17 1h6l8 7v23H8L1 25v-4" fill="none" stroke="#555" strokeWidth="1.300" />
    <path d="M13 1l8 5L8 22l-7-5z" fill="#69b0e7" stroke="#4f9bd4" strokeWidth="1" />
  </g>
);
const TThread = () => (
  <g fill="none">
    <path d="M4 1h24v30H4z" fill="#f7f7f7" stroke="#555" strokeWidth="1.300" />
    <path d="M0 13L32 7M0 20l32-7M0 26l32-6" stroke="#f7f7f7" strokeWidth="5" />
    <path d="M0 13L32 7M0 19.500l32-6M0 26l32-6" stroke="#1489e0" strokeWidth="2.500" />
  </g>
);

const features = [Cylinder, TSketch, Sphere, TFillet, TFillet, Cylinder, TThread, TChamfer, TFillet, Cylinder, TChamfer];

const Timeline = () => (
  <footer className="flex h-[100px] flex-col bg-[#f1f1f1]">
    <div className="h-1 bg-[#cccccc]" />
    <div className="flex h-[2px] bg-[#dddddd]">
      <div className="w-[270px] bg-[#cccccc]" />
    </div>
    <div className="flex h-[94px]">
      <svg className="mt-[28px] h-10 w-[270px] fill-[#666]" viewBox="0 0 270 40">
        <path d="M22 8h3v24h-3zM44 8v24L27 20z" />
        <path d="M89 8v24L70 20zM92 15h4v11h-4z" />
        <path d="M122 4l24 16-24 15z" />
        <path d="M170 15h4v11h-4zM177 8l18 12-18 12z" />
        <path d="M222 8l17 12-17 12zM241 8h3v24h-3z" />
      </svg>
      <div className="ml-[14px] flex">
        {features.map((F, i) => (
          <div key={i} className="flex w-12 flex-col items-center">
            <svg className="mt-[30px] h-8 w-8 shrink-0" viewBox="0 0 32 32">
              <F />
            </svg>
            <div className="mt-[6px] h-[10px] w-1 translate-x-[2px] bg-[#cccccc]" />
            <div
              className={`h-1 bg-[#cccccc] ${
                i === 0 ? "ml-6 w-6 self-stretch" : i === features.length - 1 ? "mr-5 self-stretch" : "self-stretch"
              }`}
            />
          </div>
        ))}
      </div>
      <svg className="-ml-[12px] mt-[18px] h-16 w-6 fill-[#666]" viewBox="0 0 24 64">
        <path d="M0 0h24v9l-8 7h-2v48h-4V16H8L0 9z" />
      </svg>
      <Gear className="ml-auto mr-[27px] mt-[31px] h-8 w-8" fill="#666" />
    </div>
  </footer>
);

export default function App() {
  return (
    <div className="flex h-[1800px] w-[2880px] flex-col overflow-hidden bg-[#f1f1f1] font-['Open_Sans','Noto_Sans',sans-serif]">
      <TitleBar />
      <Ribbon />
      <main className="relative flex-1 bg-white">
        <Scene />
        <Browser />
        <div className="absolute bottom-[9px] left-2">
          <PanelHeader title="COMMENTS" open={false} />
        </div>
        <NavBar />
        <ViewCube />
      </main>
      <Timeline />
    </div>
  );
}
